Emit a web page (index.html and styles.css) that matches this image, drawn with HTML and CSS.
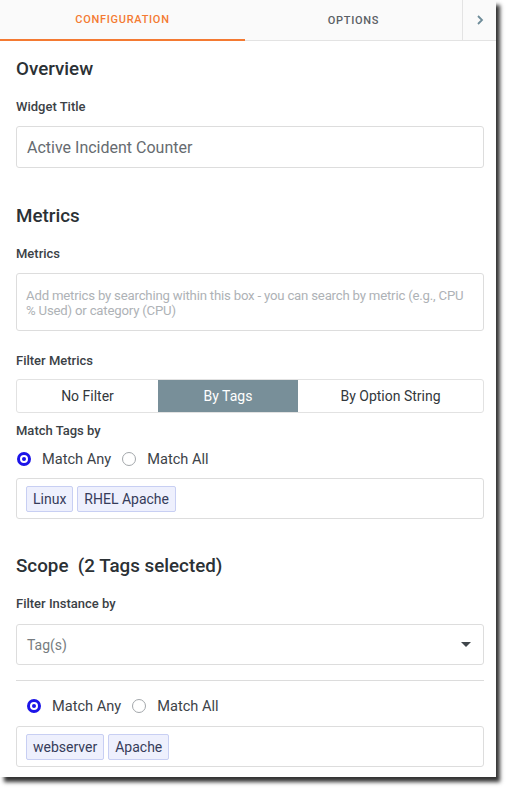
FILE: index.html
```html
<!DOCTYPE html>
<html>
<head>
    <title>Widget Configuration</title>
    <link rel="stylesheet" href="styles.css">
</head>
<body>
    <div class="panel">
        <div class="tab-bar">
            <div class="tab tab-active">Configuration</div>
            <div class="tab">Options</div>
            <div class="tab-next">
                <svg width="8" height="12" viewBox="0 0 8 12"><polyline points="2,2 6,6 2,10" fill="none" stroke="#6e8c99" stroke-width="1.8"/></svg>
            </div>
        </div>

        <div class="content">
            <h2 class="section-title">Overview</h2>
            <div class="label">Widget Title</div>
            <div class="field field-input">Active Incident Counter</div>

            <h2 class="section-title title-gap">Metrics</h2>
            <div class="label">Metrics</div>
            <div class="field field-area">Add metrics by searching within this box - you can search by metric (e.g., CPU % Used) or category (CPU)</div>

            <div class="label label-gap">Filter Metrics</div>
            <div class="segment">
                <div class="segment-item">No Filter</div>
                <div class="segment-item segment-active">By Tags</div>
                <div class="segment-item">By Option String</div>
            </div>

            <div class="label label-tight">Match Tags by</div>
            <div class="radio-row">
                <span class="radio radio-on"></span><span class="radio-text">Match Any</span>
                <span class="radio"></span><span class="radio-text">Match All</span>
            </div>
            <div class="tag-box">
                <span class="tag">Linux</span>
                <span class="tag">RHEL Apache</span>
            </div>

            <h2 class="section-title scope-gap">Scope&nbsp; (2 Tags selected)</h2>
            <div class="label">Filter Instance by</div>
            <div class="field field-select">
                <span>Tag(s)</span>
                <span class="caret"></span>
            </div>

            <div class="divider"></div>
            <div class="radio-row radio-indent">
                <span class="radio radio-on"></span><span class="radio-text">Match Any</span>
                <span class="radio"></span><span class="radio-text">Match All</span>
            </div>
            <div class="tag-box tag-box-low">
                <span class="tag">webserver</span>
                <span class="tag">Apache</span>
            </div>
        </div>
    </div>
</body>
</html>
```

FILE: styles.css
```css
body {
    margin: 0;
    padding: 0 0 11px;
    background: #ffffff;
    font-family: Roboto, 'Liberation Sans', sans-serif;
    color: #2b3135;
}

.panel {
    width: 496px;
    height: 777px;
    background: #ffffff;
    box-shadow: 4px 5px 4px rgba(0, 0, 0, 0.8);
    overflow: hidden;
}

.tab-bar {
    display: flex;
    height: 41px;
    background: #fafafa;
    border-bottom: 1px solid #e3e3e3;
    box-sizing: border-box;
}

.tab {
    display: flex;
    align-items: center;
    justify-content: center;
    width: 217px;
    font-size: 11px;
    font-weight: 500;
    letter-spacing: 0.7px;
    text-transform: uppercase;
    color: #5a6065;
    box-sizing: border-box;
    padding-top: 1px;
}

.tab-active {
    width: 245px;
    color: #f47a32;
    border-bottom: 2px solid #f47a32;
    margin-bottom: -1px;
    padding-top: 0;
}

.tab-next {
    flex: 1;
    display: flex;
    align-items: center;
    justify-content: center;
    border-left: 1px solid #e3e3e3;
}

.content {
    padding: 0 12px 0 16px;
}

.section-title {
    margin: 17px 0 0;
    font-size: 18.8px;
    line-height: 22px;
    font-weight: 500;
    color: #2b3135;
}

.title-gap {
    margin-top: 37px;
}

.scope-gap {
    margin-top: 36px;
}

.label {
    margin-top: 19px;
    font-size: 13px;
    line-height: 16px;
    font-weight: 500;
    color: #3b4146;
}

.label-gap {
    margin-top: 22px;
}

.label-tight {
    margin-top: 10px;
}

.field {
    margin-top: 11px;
    border: 1px solid #dddddd;
    border-radius: 3px;
    box-sizing: border-box;
}

.field-input {
    height: 42px;
    padding: 0 10px;
    display: flex;
    align-items: center;
    font-size: 16px;
    color: #666b70;
}

.field-area {
    height: 58px;
    padding: 14px 9px 0;
    font-size: 13.2px;
    letter-spacing: -0.2px;
    line-height: 15px;
    color: #aeb2b6;
}

.field-select {
    margin-top: 12px;
    height: 41px;
    padding: 0 12px 0 10px;
    display: flex;
    align-items: center;
    justify-content: space-between;
    font-size: 14px;
    color: #777c80;
}

.caret {
    width: 0;
    height: 0;
    border-left: 5px solid transparent;
    border-right: 5px solid transparent;
    border-top: 5px solid #40464b;
}

.segment {
    margin-top: 10px;
    height: 34px;
    display: grid;
    grid-template-columns: 141px 140px 1fr;
    border: 1px solid #e2e2e2;
    border-radius: 3px;
    box-sizing: border-box;
    overflow: hidden;
}

.segment-item {
    display: flex;
    align-items: center;
    justify-content: center;
    font-size: 14px;
    color: #33383c;
}

.segment-active {
    background: #788f99;
    color: #ffffff;
}

.radio-row {
    margin-top: 10px;
    height: 20px;
    display: flex;
    align-items: center;
    font-size: 14.6px;
    color: #3d4348;
}

.radio-indent {
    margin-top: 15px;
    padding-left: 10px;
}

.radio {
    width: 14px;
    height: 14px;
    margin-left: 1px;
    border: 1px solid #a3a7ab;
    border-radius: 50%;
    box-sizing: border-box;
}

.radio-on {
    border: 3px solid #1c14e8;
    position: relative;
}

.radio-on::after {
    content: '';
    position: absolute;
    left: 2px;
    top: 2px;
    width: 4px;
    height: 4px;
    border-radius: 50%;
    background: #1c14e8;
}

.radio-text {
    margin: 0 10px 0 11px;
}

.tag-box {
    margin-top: 9px;
    height: 41px;
    display: flex;
    align-items: center;
    gap: 4px;
    padding: 0 9px;
    border: 1px solid #dddddd;
    border-radius: 3px;
    box-sizing: border-box;
}

.tag-box-low {
    margin-top: 10px;
}

.tag {
    height: 26px;
    display: flex;
    align-items: center;
    padding: 0 6px;
    background: #eef0fd;
    border: 1px solid #c8cff3;
    border-radius: 2px;
    box-sizing: border-box;
    font-size: 14px;
    color: #363c5a;
}

.divider {
    margin-top: 15px;
    height: 1px;
    background: #dcdcdc;
}
```
